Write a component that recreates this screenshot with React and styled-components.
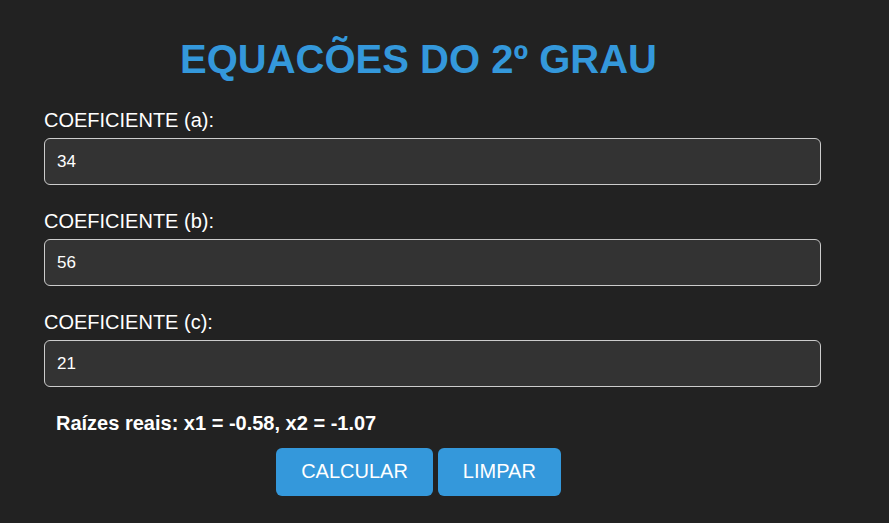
import React, { useState } from "react";
import styled, { createGlobalStyle } from "styled-components";

const GlobalStyle = createGlobalStyle`
  body {
    margin: 0;
    background: #222;
    color: #fff;
    font-family: "Liberation Sans", Arial, sans-serif;
  }
`;

const Calculator = styled.form`
  display: flex;
  flex-direction: column;
  padding: 35px 96px 27px 44px;
`;

const Title = styled.h1`
  margin: 0 0 24px;
  color: #3498db;
  font-size: 40px;
  line-height: 48px;
  text-align: center;
`;

const Field = styled.div`
  display: flex;
  flex-direction: column;
  gap: 4px;
  margin: 0 -28px 23px 0;
`;

const Label = styled.label`
  font-size: 20px;
  line-height: 27px;
`;

const Input = styled.input`
  box-sizing: border-box;
  width: 100%;
  height: 47px;
  padding: 0 12px;
  border: 1px solid #ccc;
  border-radius: 6px;
  background: #333;
  color: #fff;
  font: 17px "Liberation Sans", Arial, sans-serif;
`;

const Result = styled.output`
  padding: 0 12px;
  font-size: 20px;
  font-weight: bold;
  line-height: 26px;
`;

const Actions = styled.div`
  display: flex;
  justify-content: center;
  gap: 5px;
  margin-top: 12px;
`;

const Button = styled.button`
  height: 48px;
  padding: 0 25px 2px;
  border: 0;
  border-radius: 6px;
  background: #3498db;
  color: #fff;
  font: 20px "Liberation Sans", Arial, sans-serif;
  cursor: pointer;
`;

const initialValues = { a: "34", b: "56", c: "21" };

export default function App() {
  const [values, setValues] = useState(initialValues);
  const [result, setResult] = useState("Raízes reais: x1 = -0.58, x2 = -1.07");

  const calculate = (event) => {
    event.preventDefault();
    const [a, b, c] = [values.a, values.b, values.c].map(Number);
    const delta = b * b - 4 * a * c;
    if (!a) {
      setResult("O coeficiente (a) deve ser diferente de zero");
    } else if (delta < 0) {
      setResult("Não existem raízes reais");
    } else {
      const x1 = (-b + Math.sqrt(delta)) / (2 * a);
      const x2 = (-b - Math.sqrt(delta)) / (2 * a);
      setResult(`Raízes reais: x1 = ${x1.toFixed(2)}, x2 = ${x2.toFixed(2)}`);
    }
  };

  const clear = () => {
    setValues({ a: "", b: "", c: "" });
    setResult("");
  };

  return (
    <>
      <GlobalStyle />
      <Calculator onSubmit={calculate}>
        <Title>EQUACÕES DO 2º GRAU</Title>
        {["a", "b", "c"].map((name) => (
          <Field key={name}>
            <Label htmlFor={name}>COEFICIENTE ({name}):</Label>
            <Input
              id={name}
              type="number"
              step="any"
              value={values[name]}
              onChange={(e) => setValues({ ...values, [name]: e.target.value })}
            />
          </Field>
        ))}
        <Result>{result}</Result>
        <Actions>
          <Button type="submit">CALCULAR</Button>
          <Button type="button" onClick={clear}>LIMPAR</Button>
        </Actions>
      </Calculator>
    </>
  );
}
